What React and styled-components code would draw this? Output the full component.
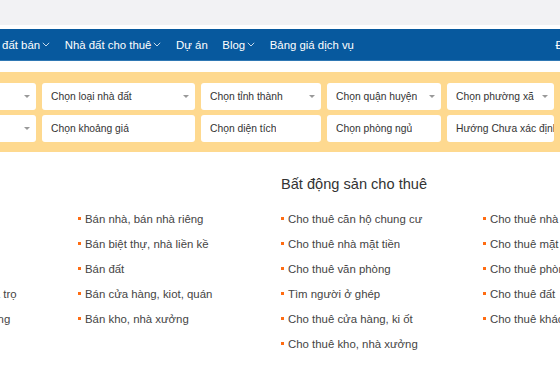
import React from "react";
import styled, { createGlobalStyle } from "styled-components";

const GlobalStyle = createGlobalStyle`
  html, body { margin: 0; padding: 0; background: #fff; overflow: hidden; }
  body { font-family: "Liberation Sans", Arial, sans-serif; }
  * { box-sizing: border-box; }
`;

const Page = styled.div`
  width: 1400px;
  margin-left: -130px;
`;

const TopBar = styled.div`
  height: 25px;
  background: #f2f2f4;
  margin-bottom: 4px;
`;

const Nav = styled.nav`
  height: 32px;
  background: #07599e;
  border-bottom: 1px solid #2f78b4;
  display: flex;
  align-items: center;
  padding-left: 108px;
  gap: 14.6px;
`;

const NavItem = styled.a`
  display: flex;
  align-items: center;
  gap: 2px;
  color: #fff;
  font-size: 11.4px;
  text-decoration: none;
  white-space: nowrap;
`;

const NavRight = styled(NavItem)`
  margin-left: 187px;
`;

const Chevron = () => (
  <svg width="8" height="5" viewBox="0 0 8 5" fill="none">
    <path d="M0.8 0.8 L4 4 L7.2 0.8" stroke="#dfe9f3" strokeWidth="0.9" />
  </svg>
);

const FilterBar = styled.div`
  margin-top: 11px;
  background: #fed98f;
  height: 80px;
  padding: 11px 0 0 16px;
  display: grid;
  grid-template-columns: 150px 153px 120px 114px 107px;
  grid-auto-rows: 27px;
  column-gap: 6px;
  row-gap: 5px;
`;

const Field = styled.div`
  background: #fff;
  border-radius: 3px;
  display: flex;
  align-items: center;
  justify-content: space-between;
  padding: 0 ${(p) => (p.$select ? "6px" : "0")} 0 9px;
  font-size: 10.3px;
  color: #333;
  white-space: nowrap;
  overflow: hidden;
`;

const Label = styled.span`
  overflow: hidden;
`;

const Caret = styled.span`
  flex: none;
  width: 0;
  height: 0;
  border-left: 3px solid transparent;
  border-right: 3px solid transparent;
  border-top: 3px solid #999;
  margin-left: 6px;
`;

const Content = styled.div`
  display: flex;
  padding: 22px 0 0 6px;
`;

const Section = styled.section`
  width: 405px;
  flex: none;
`;

const Heading = styled.h3`
  margin: 0 0 12px 0;
  height: 20px;
  line-height: 20px;
  font-size: 14.6px;
  font-weight: normal;
  color: #333;
  white-space: nowrap;
`;

const Columns = styled.div`
  display: grid;
  grid-template-columns: 202px 203px;
`;

const List = styled.ul`
  list-style: none;
  margin: 0;
  padding: 0;
`;

const Item = styled.li`
  height: 25px;
  display: flex;
  align-items: center;
  font-size: 11.4px;
  color: #444;
  white-space: nowrap;
  &::before {
    content: "";
    width: 3px;
    height: 3px;
    background: #ff6c12;
    margin-right: 4px;
    flex: none;
  }
`;

const filters = [
  { label: "Nhà đất bán", caret: true },
  { label: "Chọn loại nhà đất", caret: true },
  { label: "Chọn tỉnh thành", caret: true },
  { label: "Chọn quận huyện", caret: true },
  { label: "Chọn phường xã", caret: true },
  { label: "Nhập tên dự án", caret: true },
  { label: "Chọn khoảng giá" },
  { label: "Chọn diện tích" },
  { label: "Chọn phòng ngủ" },
  { label: "Hướng Chưa xác định" },
];

const sections = [
  {
    title: "Bất động sản bán",
    cols: [
      [
        "Bán căn hộ chung cư",
        "Bán nhà mặt phố",
        "Bán đất nền dự án",
        "Bán chung cư mini nhà trọ",
        "Bán biệt thự, nghỉ dưỡng",
      ],
      [
        "Bán nhà, bán nhà riêng",
        "Bán biệt thự, nhà liền kề",
        "Bán đất",
        "Bán cửa hàng, kiot, quán",
        "Bán kho, nhà xưởng",
      ],
    ],
  },
  {
    title: "Bất động sản cho thuê",
    cols: [
      [
        "Cho thuê căn hộ chung cư",
        "Cho thuê nhà mặt tiền",
        "Cho thuê văn phòng",
        "Tìm người ở ghép",
        "Cho thuê cửa hàng, ki ốt",
        "Cho thuê kho, nhà xưởng",
      ],
      [
        "Cho thuê nhà riêng",
        "Cho thuê mặt bằng",
        "Cho thuê phòng trọ",
        "Cho thuê đất",
        "Cho thuê khác",
      ],
    ],
  },
];

export default function App() {
  return (
    <>
      <GlobalStyle />
      <Page>
        <TopBar />
        <Nav>
          <NavItem>Nhà đất bán<Chevron /></NavItem>
          <NavItem>Nhà đất cho thuê<Chevron /></NavItem>
          <NavItem>Dự án</NavItem>
          <NavItem>Blog<Chevron /></NavItem>
          <NavItem>Bảng giá dịch vụ</NavItem>
          <NavRight>Đăng nhập</NavRight>
        </Nav>
        <FilterBar>
          {filters.map((f, i) => (
            <Field key={i} $select={f.caret}>
              <Label>{f.label}</Label>
              {f.caret && <Caret />}
            </Field>
          ))}
        </FilterBar>
        <Content>
          {sections.map((s) => (
            <Section key={s.title}>
              <Heading>{s.title}</Heading>
              <Columns>
                {s.cols.map((c, ci) => (
                  <List key={ci}>
                    {c.map((t) => (
                      <Item key={t}>{t}</Item>
                    ))}
                  </List>
                ))}
              </Columns>
            </Section>
          ))}
        </Content>
      </Page>
    </>
  );
}
